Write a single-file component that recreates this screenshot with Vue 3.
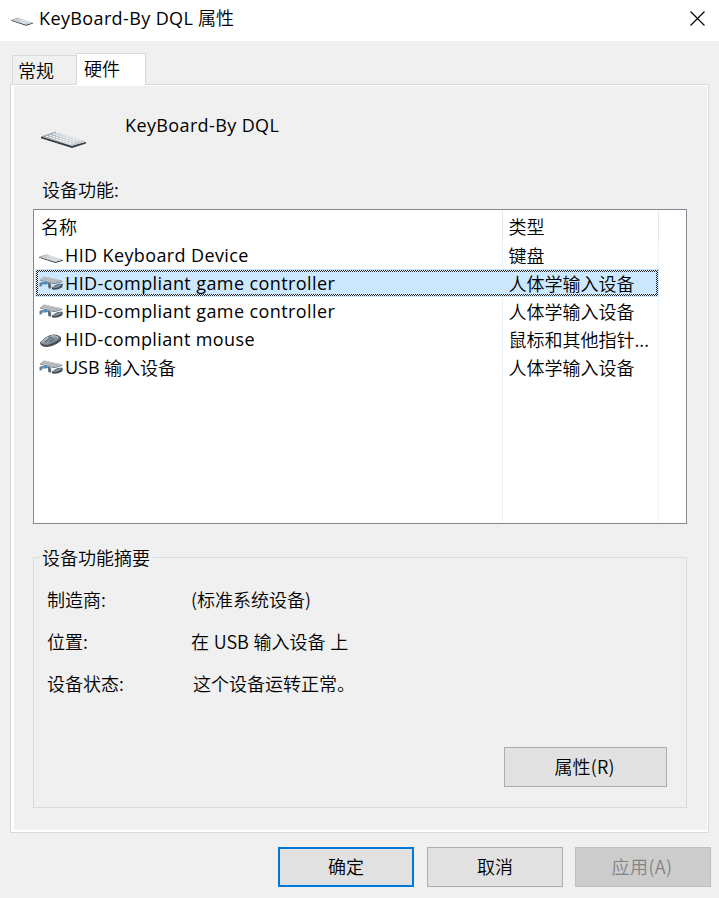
<script setup>
const devices = [
  { icon: 'keyboard', name: 'HID Keyboard Device', type: '键盘', size: 'a' },
  { icon: 'hid', name: 'HID-compliant game controller', type: '人体学输入设备', selected: true, size: 'b' },
  { icon: 'hid', name: 'HID-compliant game controller', type: '人体学输入设备', size: 'b' },
  { icon: 'mouse', name: 'HID-compliant mouse', type: '鼠标和其他指针...', size: 'c' },
  { icon: 'hid', name: 'USB', suffix: '输入设备', type: '人体学输入设备', size: 'd' },
]
const details = [
  { label: '制造商:', value: '(标准系统设备)' },
  { label: '位置:', value: '在 USB 输入设备 上' },
  { label: '设备状态:', value: '这个设备运转正常。', shift: true },
]
</script>

<template>
  <svg class="defs" width="0" height="0">
    <defs>
      <linearGradient id="mg" x1="0" y1="0" x2="1" y2="1">
        <stop offset="0" stop-color="#b4bec6" /><stop offset="1" stop-color="#66727c" />
      </linearGradient>
      <linearGradient id="kg" x1="0" y1="0" x2="1" y2="0">
        <stop offset="0" stop-color="#8f989f" /><stop offset=".5" stop-color="#c6cbd0" /><stop offset="1" stop-color="#c2ccd4" />
      </linearGradient>
      <symbol id="keyboard" viewBox="0 0 45 17">
        <path d="M0 5.5 31 14.5 45 11v1.6L31 17 0 7.2Z" fill="#303b43" />
        <path d="M0 5.4 14 .5 45 10.5 31 15Z" fill="url(#kg)" />
        <path d="m5 5.2 25.5 7.9M8.5 4 34 11.9M12 2.8l25.5 7.9M15 1.7l26 8.2" stroke="#f2f4f5" stroke-width="1.3" stroke-dasharray="2.6 .8" />
      </symbol>
      <symbol id="hid" viewBox="0 0 24 16">
        <path d="M1 4.4 15 8 23.4 6v1L15 9.2 1 5.6Z" fill="#7b848b" />
        <path d="M1 4.4 5 1.4 23.4 5.6 15 8Z" fill="#a6abaf" />
        <path d="m3 4.3 12 2.9M4.5 3.2l13 3.1M6 2.2l14 3.3" stroke="#d5d8da" stroke-width=".7" stroke-dasharray="1.6 .7" />
        <path d="M.4 8.4Q2.4 6.4 5 7.2L3.8 9.2 2.4 11.4.6 11.6Z" fill="#6f7d89" />
        <path d="M9 7.8q2.6 0 3.2 2.4.6 2.4-.8 3.6l-2-.6-.4-3Z" fill="#5c6974" />
        <path d="m4.6 6.8 2.4-.2 2.2.8-.4 1.6-2 .6-2.6 0Z" fill="#3d8fcb" />
        <path d="M12.6 12.8q2-.8 3.8-2.6 3-1.8 7.2-1.4l.2 1.2-.8 2.6q-3.8 2.4-8.4 2.2-2-.2-2-2Z" fill="#3e4c58" />
        <path d="M14 12.6q1.6-.8 3.2-2.2 2.4-1.2 5.4-1l.2.6q-2.2 2.4-6.2 3-1.8.2-2.6-.4Z" fill="#83919d" />
      </symbol>
      <symbol id="mouse" viewBox="0 0 21 13">
        <path d="M0 8.4Q4 3.6 10 1q7-2 11 2.6v2.8Q16 11.6 7 13 0 12.6 0 8.4Z" fill="#414d57" />
        <path d="M.8 7.9Q5 3.6 10.4 1.6 16.4 0 20.2 4 15.4 9.2 7.2 10.9 2 10.8.8 7.9Z" fill="url(#mg)" />
        <path d="M10.6 4.6 4.6 8.2M8 2.8Q12 3 13.4 5.6L9.6 8" fill="none" stroke="#3f4c56" stroke-width=".8" />
        <path d="M2 7.8q3.4-3 6.6-4.4M11 2q4-1 7.2 1" fill="none" stroke="#c3ccd2" stroke-width=".8" />
      </symbol>
    </defs>
  </svg>
  <main class="dialog">
    <header class="titlebar">
      <svg class="title-icon"><use href="#keyboard" /></svg>
      <h1><span class="lat title-lat">KeyBoard-By DQL</span><span>属性</span></h1>
      <svg class="close" viewBox="0 0 15 15"><path d="m.5.5 14 14m0-14-14 14" stroke="#000" stroke-width="1.15" /></svg>
    </header>
    <nav class="tabs">
      <div class="tab">常规</div>
      <div class="tab active">硬件</div>
    </nav>
    <section class="panel">
      <div class="device-head">
        <svg class="device-icon"><use href="#keyboard" /></svg>
        <span class="lat head-lat">KeyBoard-By DQL</span>
      </div>
      <div class="caption">设备功能:</div>
      <div class="list">
        <div class="row header"><span class="name">名称</span><span class="type">类型</span></div>
        <div v-for="(d, i) in devices" :key="i" class="row" :class="{ selected: d.selected }">
          <span class="name">
            <svg :class="['icon', d.icon]"><use :href="'#' + d.icon" /></svg>
            <span :class="['lat', 'lat-' + d.size]">{{ d.name }}</span><span v-if="d.suffix" class="cjk">{{ d.suffix }}</span>
          </span>
          <span class="type cjk">{{ d.type }}</span>
        </div>
        <div class="rest"><span class="name"></span><span class="type"></span></div>
      </div>
      <section class="group">
        <h2>设备功能摘要</h2>
        <dl>
          <div v-for="d in details" :key="d.label" class="detail">
            <dt>{{ d.label }}</dt><dd :class="{ shift: d.shift }">{{ d.value }}</dd>
          </div>
        </dl>
        <button class="props">属性(R)</button>
      </section>
    </section>
    <footer>
      <button class="primary">确定</button>
      <button>取消</button>
      <button class="disabled" disabled>应用(A)</button>
    </footer>
  </main>
</template>

<style>
body { margin: 0; background: #f0f0f0; }
</style>

<style scoped>
* { box-sizing: border-box; }
.defs { position: absolute; }
.dialog {
  width: 719px; height: 898px; background: #f0f0f0; color: #000; overflow: hidden;
  font: 18px/28px "Noto Sans CJK SC", "Noto Sans", sans-serif; font-weight: 350; white-space: nowrap;
}
svg { flex: none; }
h1, h2, dl, dd { margin: 0; font: inherit; }
.lat { font-family: "Open Sans", "Noto Sans", sans-serif; font-weight: 400; letter-spacing: .38px; }
.titlebar { height: 41px; background: #fff; display: flex; padding-left: 11px; }
.title-icon { width: 22px; height: 9px; margin-top: 17px; }
h1 { display: flex; margin: 4px 0 0 6px; width: 640px; }
h1 span + span { line-height: 27px; }
.title-lat { width: 159px; }
.close { width: 15px; height: 15px; margin: 11px 0 0 11px; }
.tabs { display: flex; align-items: flex-end; height: 44px; padding-left: 12px; position: relative; z-index: 1; }
.tab { width: 64px; height: 29px; margin-bottom: 1px; border: 1px solid #d9d9d9; border-width: 1px 0 0 1px; padding-left: 5px; line-height: 28px; }
.tab.active { width: 70px; height: 32px; margin-bottom: 0; background: #fff; border-width: 1px 1px 0; padding-left: 7px; }
.panel { width: 699px; height: 749px; margin: -1px 0 0 10px; border: 1px solid #d9d9d9; box-shadow: inset 3px 1px #fff, inset -1px -2px #fff; padding: 0 21px 0 22px; }
.device-head { height: 90px; display: flex; padding: 26px 0 0 8px; }
.device-icon { width: 45px; height: 17px; margin: 20px 39px 0 0; }
.caption { height: 34px; padding-left: 9px; line-height: 28px; }
.list { width: 654px; height: 315px; border: 1px solid #828790; background: #fff; padding: 1px; display: flex; flex-direction: column; }
.row, .rest { display: flex; width: 624px; height: 28px; position: relative; }
.row.header { height: 30px; line-height: 30px; }
.cjk { line-height: 28px; }
.name { width: 468px; border-right: 1px solid #e8f2fd; display: flex; position: relative; padding-left: 3px; }
.type { width: 156px; border-right: 1px solid #e8f2fd; padding-left: 5.5px; position: relative; }
.header .name { padding-left: 6px; }
.header .name, .header .type { border-color: #e5e5e5; }
.rest { flex: 1; }
.selected { background: #cce8ff; }
.selected .name { border-color: #c0e0fc; }
.selected::before { content: ""; position: absolute; inset: 1px; background: repeating-conic-gradient(#222 0 25%, #dceeff 0 50%) 0 0 / 2px 2px; }
.selected::after { content: ""; position: absolute; inset: 3px; background: #cce8ff; }
.selected > span { z-index: 1; }
.selected .name, .selected .type { border-right-color: transparent; }
.icon { width: 24px; height: 16px; margin: 6px 2px 0 1px; }
.icon.keyboard { height: 9px; margin-top: 13px; }
.icon.mouse { width: 21px; height: 13px; margin: 9px 4px 0 2px; }
.lat-b { letter-spacing: .41px; }
.lat-d { width: 39px; letter-spacing: 0; }
.group { position: relative; width: 654px; height: 251px; margin-top: 33px; border: 1px solid #dcdcdc; display: flex; flex-direction: column; }
h2 { width: 113px; height: 28px; margin: -15px 0 0 6px; padding-left: 2px; background: #f0f0f0; line-height: 28px; }
dl { padding: 14px 0 0 13px; }
.detail { display: flex; height: 42px; line-height: 28px; word-spacing: .7px; }
dt { width: 144px; }
.shift { padding-left: 2px; }
button { width: 136px; height: 40px; padding: 0 0 2px; border: 1px solid #adadad; background: #e1e1e1; color: #000; font: inherit; }
.props { width: 163px; margin: 36px 0 0 470px; padding-right: 2px; letter-spacing: .2px; }
footer { display: flex; padding: 14px 0 0 278px; }
footer button { margin-right: 12px; }
footer .primary { border: 2px solid #0078d7; margin-right: 13px; }
footer .disabled { background: #ccc; border-color: #bfbfbf; color: #838383; margin: 0; padding-right: 2px; letter-spacing: .4px; }
</style>
